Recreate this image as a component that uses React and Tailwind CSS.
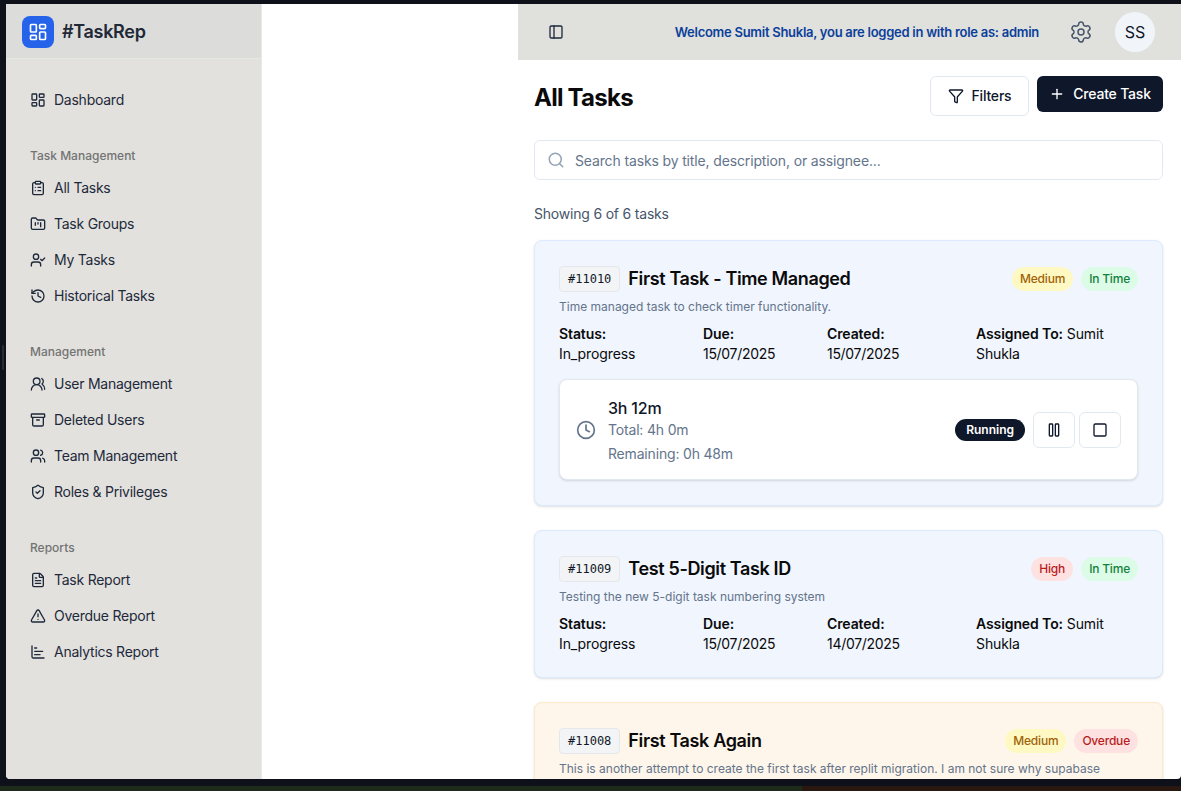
import {
  Archive,
  ChartBar,
  ClipboardList,
  Clock,
  FileText,
  Filter,
  FolderKanban,
  History,
  LayoutDashboard,
  PanelLeft,
  Pause,
  Plus,
  Search,
  Settings,
  ShieldCheck,
  Square,
  TriangleAlert,
  UserCheck,
  Users,
  UsersRound,
} from "lucide-react";

const navGroups = [
  {
    label: "Task Management",
    items: [
      { name: "All Tasks", icon: ClipboardList },
      { name: "Task Groups", icon: FolderKanban },
      { name: "My Tasks", icon: UserCheck },
      { name: "Historical Tasks", icon: History },
    ],
  },
  {
    label: "Management",
    items: [
      { name: "User Management", icon: UsersRound },
      { name: "Deleted Users", icon: Archive },
      { name: "Team Management", icon: Users },
      { name: "Roles & Privileges", icon: ShieldCheck },
    ],
  },
  {
    label: "Reports",
    items: [
      { name: "Task Report", icon: FileText },
      { name: "Overdue Report", icon: TriangleAlert },
      { name: "Analytics Report", icon: ChartBar },
    ],
  },
];

const pillStyles = {
  Medium: "bg-[#fef9c3] text-[#a16207]",
  High: "bg-[#fee2e2] text-[#b91c1c]",
  "In Time": "bg-[#dcfce7] text-[#15803d]",
  Overdue: "bg-[#fee2e2] text-[#b91c1c]",
};

function NavItem({ name, icon: Icon }) {
  return (
    <div className="flex h-9 items-center gap-2 px-1 text-sm tracking-[-0.25px] text-[#1e293b]">
      <Icon size={16} strokeWidth={2} className="shrink-0 text-[#1e293b]" />
      <span>{name}</span>
    </div>
  );
}

function Sidebar() {
  return (
    <aside className="flex h-full w-[256px] shrink-0 flex-col rounded-bl-sm border-r border-[#e8e8e5] bg-[#e2e1dd]">
      <div className="flex h-[55px] shrink-0 items-center gap-2 border-b border-[#e6e6e3] bg-[#dcdcda] px-4 pt-[2px]">
        <div className="flex h-8 w-8 items-center justify-center rounded-lg bg-[#2563eb]">
          <LayoutDashboard size={20} className="text-white" />
        </div>
        <span className="text-lg font-semibold tracking-[-0.3px] text-[#1f2937]">#TaskRep</span>
      </div>
      <nav className="px-5 pt-[23px]">
        <NavItem name="Dashboard" icon={LayoutDashboard} />
        {navGroups.map((group) => (
          <div key={group.label} className="mt-[26px]">
            <div className="flex h-5 items-center px-1 pt-[6px] pb-[2px] text-xs font-medium text-[#737373]">
              {group.label}
            </div>
            <div className="mt-[6px]">
              {group.items.map((item) => (
                <NavItem key={item.name} {...item} />
              ))}
            </div>
          </div>
        ))}
      </nav>
    </aside>
  );
}

function Pill({ label }) {
  return (
    <span className={`flex h-6 items-center rounded-full px-2 text-xs font-medium tracking-[-0.2px] ${pillStyles[label]}`}>
      {label}
    </span>
  );
}

function Field({ label, value }) {
  return (
    <div>
      <span className="font-semibold">{label}</span> {value}
    </div>
  );
}

function DateValue({ value }) {
  return (
    <>
      <br />
      <span className="tracking-[-0.3px]">{value}</span>
    </>
  );
}

function Timer() {
  return (
    <div className="mt-4 mb-px flex h-[101px] items-center justify-between rounded-lg border border-[#e2e8f0] bg-white px-4 shadow-sm">
      <div className="flex items-center gap-3">
        <Clock size={20} className="text-[#64748b]" />
        <div>
          <div className="pt-1 text-base leading-5 font-medium tracking-[-0.2px] text-[#0f172a]">3h 12m</div>
          <div className="text-sm leading-6 tracking-[-0.18px] text-[#64748b]">Total: 4h 0m</div>
          <div className="text-sm leading-6 tracking-[-0.18px] text-[#64748b]">Remaining: 0h 48m</div>
        </div>
      </div>
      <div className="flex items-center gap-1">
        <span className="mr-1 flex h-[22px] items-center rounded-full bg-[#0f172a] px-[11px] text-xs font-semibold text-white">
          Running
        </span>
        <button className="flex h-9 w-[42px] items-center justify-center rounded-md border border-[#e2e8f0] bg-white">
          <Pause size={16} className="text-[#0f172a]" />
        </button>
        <button className="flex h-9 w-[42px] items-center justify-center rounded-md border border-[#e2e8f0] bg-white">
          <Square size={16} className="text-[#0f172a]" />
        </button>
      </div>
    </div>
  );
}

function TaskCard({ task }) {
  const overdue = task.state === "Overdue";
  return (
    <div
      className={`shrink-0 rounded-lg border p-6 shadow-sm ${
        overdue ? "border-[#fde9c8] bg-[#fef6ea]" : "border-[#dbeafe] bg-[#f0f5fe]"
      }`}
    >
      <div className="flex items-center justify-between">
        <div className="flex items-center gap-2">
          <span className="flex h-[26px] items-center rounded border border-[#e5e7eb] bg-[#f3f4f6] px-2 font-['DejaVu_Sans_Mono',monospace] text-xs text-[#111827]">
            {task.id}
          </span>
          <h3 className="text-lg font-semibold tracking-[-0.36px] text-[#0a0a0a]">{task.title}</h3>
        </div>
        <div className="flex items-center gap-2">
          <Pill label={task.priority} />
          <Pill label={task.state} />
        </div>
      </div>
      <p className="mt-[6px] text-xs leading-4 text-[#64748b]">{task.description}</p>
      {!overdue && (
        <div className="mt-[9px] -mb-px grid grid-cols-[144px_124px_149px_1fr] text-sm leading-5 tracking-[-0.1px] text-[#0a0a0a]">
          <Field label="Status:" value={<><br />In_progress</>} />
          <Field label="Due:" value={<DateValue value={task.due} />} />
          <Field label="Created:" value={<DateValue value={task.created} />} />
          <Field label="Assigned To:" value="Sumit Shukla" />
        </div>
      )}
      {task.timer && <Timer />}
    </div>
  );
}

const tasks = [
  {
    id: "#11010",
    title: "First Task - Time Managed",
    priority: "Medium",
    state: "In Time",
    description: "Time managed task to check timer functionality.",
    due: "15/07/2025",
    created: "15/07/2025",
    timer: true,
  },
  {
    id: "#11009",
    title: "Test 5-Digit Task ID",
    priority: "High",
    state: "In Time",
    description: "Testing the new 5-digit task numbering system",
    due: "15/07/2025",
    created: "14/07/2025",
  },
  {
    id: "#11008",
    title: "First Task Again",
    priority: "Medium",
    state: "Overdue",
    description: "This is another attempt to create the first task after replit migration. I am not sure why supabase",
  },
];

export default function App() {
  return (
    <div className="relative flex h-[791px] w-[1181px] flex-col overflow-hidden bg-[#0f111a] font-['Inter',sans-serif]">
      <div className="absolute top-[345px] left-[2px] h-[25px] w-[2px] rounded-full bg-[#2a2c33]" />
      <div className="mt-1 ml-[6px] flex h-[775px] shrink-0 overflow-hidden rounded-b-sm bg-white">
        <Sidebar />
        <div className="w-[256px] shrink-0 bg-white" />
        <main className="flex min-w-0 flex-1 flex-col">
          <header className="flex h-14 shrink-0 items-center justify-between bg-[#e0e0dd] pr-[26px] pl-[30px]">
            <PanelLeft size={16} className="text-[#1e293b]" />
            <div className="flex items-center">
              <span className="pt-px text-[13px] font-semibold tracking-[-0.27px] text-[#0b3f9a]">
                Welcome Sumit Shukla, you are logged in with role as: admin
              </span>
              <Settings size={24} strokeWidth={1.5} className="mr-[22px] ml-[30px] text-[#475569]" />
              <div className="flex h-10 w-10 items-center justify-center rounded-full bg-[#f1f5f9] text-base text-[#0f172a]">
                SS
              </div>
            </div>
          </header>
          <div className="flex flex-col gap-6 overflow-hidden pt-4 pr-[18px] pl-4">
            <div className="flex shrink-0 items-start justify-between">
              <h1 className="mt-[6px] text-2xl font-bold tracking-[-0.75px] text-[#0a0a0a]">All Tasks</h1>
              <div className="flex gap-2">
                <button className="flex h-10 w-[99px] items-center justify-center gap-2 rounded-md border border-[#e2e8f0] bg-white text-sm font-medium tracking-[-0.2px] text-[#0f172a]">
                  <Filter size={16} />
                  Filters
                </button>
                <button className="flex h-9 w-[126px] items-center justify-center gap-2 rounded-md bg-[#0f172a] text-sm font-medium tracking-[-0.2px] text-white">
                  <Plus size={16} />
                  Create Task
                </button>
              </div>
            </div>
            <div className="flex h-10 shrink-0 items-center gap-[10px] rounded-md border border-[#e2e8f0] bg-white px-3">
              <Search size={18} className="text-[#94a3b8]" />
              <span className="pt-px text-sm tracking-[-0.14px] text-[#64748b]">
                Search tasks by title, description, or assignee...
              </span>
            </div>
            <p className="-mb-2 shrink-0 text-sm tracking-[-0.2px] text-[#475569]">Showing 6 of 6 tasks</p>
            {tasks.map((task) => (
              <TaskCard key={task.id} task={task} />
            ))}
          </div>
        </main>
      </div>
      <div className="mt-[7px] flex h-[5px] shrink-0">
        <div className="w-[802px] bg-[#1e2a1a]" />
        <div className="flex-1 bg-[#2a1710]" />
      </div>
    </div>
  );
}
